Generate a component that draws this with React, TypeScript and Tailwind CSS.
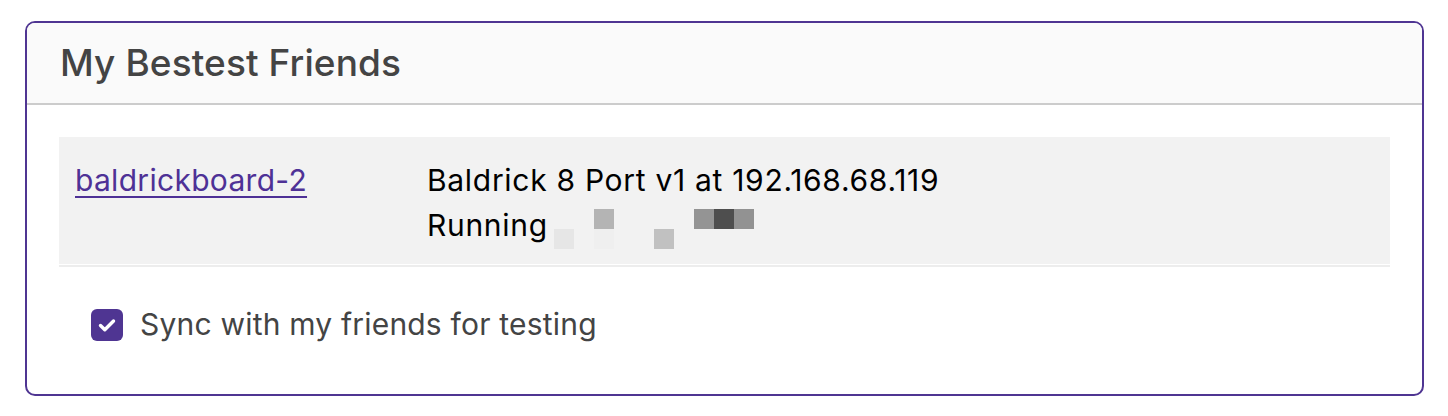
import React from "react";

function Pixels() {
  const cells: [number, number, string][] = [
    [40, 0, "#b4b4b4"],
    [0, 20, "#e6e6e6"],
    [40, 20, "#efefef"],
    [100, 20, "#c1c1c1"],
    [140, 0, "#949494"],
    [160, 0, "#4e4e4e"],
    [180, 0, "#929292"],
  ];
  return (
    <svg width="200" height="40" viewBox="0 0 200 40" className="inline-block ml-[6px] align-[-13px]">
      {cells.map(([x, y, c], i) => (
        <rect key={i} x={x} y={y} width="20" height="20" fill={c} />
      ))}
    </svg>
  );
}

export default function App() {
  return (
    <div className="bg-white w-[1448px] h-[416px] pt-[21px] pl-[25px] pr-[24px]" style={{ fontFamily: "Inter, 'Noto Sans', sans-serif" }}>
      <div className="border-2 border-[#4f3592] rounded-[10px] overflow-hidden h-[375px]">
        <div className="bg-[#fafafa] h-[82px] border-b-2 border-[#cccccc] pl-[33px] flex items-center">
          <h1 className="text-[37px] text-[#444444] font-medium leading-none pb-[2px] tracking-[0.1px]">My Bestest Friends</h1>
        </div>
        <div className="px-[32px] pt-[32px]">
          <div className="bg-[#f2f2f2] pl-[16px] pt-[21px] pb-[15px] grid grid-cols-[352px_1fr] text-[30px] leading-[45px]">
            <div>
              <a href="#" className="text-[#4e3196] underline underline-offset-[5px] decoration-2 tracking-[0.3px]">baldrickboard-2</a>
            </div>
            <div className="text-black tracking-[0.7px]">
              <div>Baldrick 8 Port v1 at 192.168.68.119</div>
              <div>
                Running
                <Pixels />
              </div>
            </div>
          </div>
          <div className="mt-[1px] h-[2px] bg-[#ededed]" />
          <div className="flex items-center mt-[35px] pl-[32px]">
            <div className="w-[32px] h-[32px] rounded-[6px] bg-[#4f3592] flex items-center justify-center">
              <svg width="24" height="24" viewBox="0 0 24 24" fill="none" stroke="white" strokeWidth="3.4" strokeLinecap="round" strokeLinejoin="round">
                <path d="M5.5 12.5l4.3 4.3L18.5 8" />
              </svg>
            </div>
            <span className="ml-[17px] text-[30px] text-[#444444] tracking-[0.2px]">Sync with my friends for testing</span>
          </div>
        </div>
      </div>
    </div>
  );
}
